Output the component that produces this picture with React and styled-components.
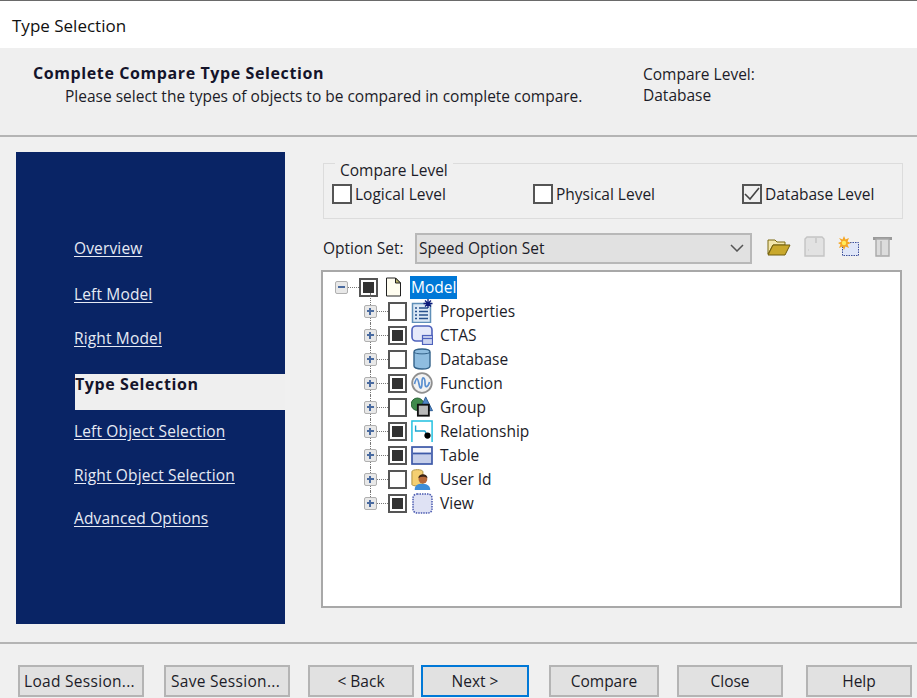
import React from 'react'
import styled, { createGlobalStyle } from 'styled-components'

const GlobalStyle = createGlobalStyle`
  html, body { margin: 0; padding: 0; background: #f0f0f0; }
  body { font-family: "Open Sans", "Noto Sans", "Liberation Sans", sans-serif; font-size: 15.5px; color: #1c1c28; }
  * { box-sizing: border-box; }
`

const Dialog = styled.div`
  width: 917px;
  height: 698px;
  overflow: hidden;
  display: flex;
  flex-direction: column;
  border-top: 1px solid #6a6a6a;
`
const TitleBar = styled.div`
  height: 47px;
  background: #fff;
  padding: 14px 0 0 12px;
  font-size: 17px;
  line-height: 22px;
  color: #111;
`
const Banner = styled.div`
  height: 89px;
  background: #efefef;
  border-bottom: 2px solid #b4b4b4;
  display: flex;
  padding-top: 14px;
`
const BannerText = styled.div`
  width: 643px;
  padding-left: 33px;
  line-height: 22px;
`
const BannerTitle = styled.div`
  font-weight: 700;
  font-size: 16px;
  letter-spacing: 0.6px;
  margin-bottom: 1px;
  color: #14142a;
`
const BannerSub = styled.div`
  padding-left: 32px;
`
const BannerLevel = styled.div`
  line-height: 21px;
  padding-top: 2px;
`
const Main = styled.div`
  height: 507px;
  display: flex;
  padding: 15px 0 0 16px;
  border-bottom: 2px solid #b4b4b4;
  background: #f0f0f0;
`
const Sidebar = styled.nav`
  width: 269px;
  height: 472px;
  flex: none;
  background: #092465;
  padding-top: 84px;
  display: flex;
  flex-direction: column;
`
const NavLink = styled.a`
  display: block;
  margin-top: ${p => p.$gap}px;
  padding-left: 58px;
  line-height: 24px;
  color: #e6eaf4;
  text-decoration: underline;
  text-underline-offset: 2px;
  font-size: 15.5px;
  letter-spacing: 0.15px;
`
const NavCurrent = styled.div`
  margin-top: ${p => p.$gap}px;
  margin-left: 59px;
  height: 36px;
  background: #efefef;
  font-weight: 700;
  font-size: 16px;
  letter-spacing: 0.6px;
  color: #14142a;
  line-height: 20px;
`
const Content = styled.div`
  flex: 1;
  padding: 11px 0 0 36px;
  display: flex;
  flex-direction: column;
`
const GroupBox = styled.div`
  margin-left: 2px;
  width: 580px;
  height: 56px;
  border: 1px solid #dcdcdc;
  padding: 19px 0 0 8px;
  display: flex;
  align-items: flex-start;
  position: relative;
`
const GroupLegend = styled.span`
  position: absolute;
  left: 11px;
  top: -1px;
  padding: 0 5px;
  line-height: 14px;
  background: #f0f0f0;
`
const CheckRow = styled.label`
  display: flex;
  align-items: center;
  width: ${p => p.$w}px;
  gap: 3px;
`
const CheckBox = styled.span`
  width: 20px;
  height: 20px;
  border: 2px solid #555;
  background: ${p => (p.$plain ? '#f0f0f0' : '#fff')};
  display: flex;
  align-items: center;
  justify-content: center;
  flex: none;
`
const OptionRow = styled.div`
  margin-top: 14px;
  height: 30px;
  display: flex;
  align-items: center;
`
const OptionLabel = styled.span`
  width: 94px;
  flex: none;
  padding-left: 2px;
`
const Select = styled.div`
  width: 337px;
  height: 31px;
  flex: none;
  background: #e1e1e1;
  border: 2px solid #b8b8b8;
  display: flex;
  align-items: center;
  justify-content: space-between;
  padding: 0 6px 0 2px;
`
const Tools = styled.div`
  margin: 0 0 3px 15px;
  display: flex;
  gap: 13px;
  align-items: center;
`
const TreeBox = styled.div`
  margin-top: 7px;
  width: 581px;
  height: 338px;
  background: #fff;
  border: 2px solid #a8a8a8;
  padding: 3px 0 0 12px;
`
const TreeRow = styled.div`
  height: 24px;
  display: flex;
  align-items: center;
  padding-left: ${p => (p.$child ? 29 : 0)}px;
  position: relative;
  &::before {
    content: ${p => (p.$child ? '""' : 'none')};
    position: absolute;
    left: 35px;
    top: ${p => (p.$first ? -6 : 0)}px;
    height: ${p => (p.$last ? 12 : p.$first ? 30 : 24)}px;
    border-left: 1px dotted #777;
  }
`
const Expander = styled.span`
  width: 13px;
  height: 13px;
  border: 1.5px solid #b0b0b0;
  border-radius: 2px;
  background: #e8e8e8;
  position: relative;
  flex: none;
  z-index: 1;
  &::before {
    content: "";
    position: absolute;
    left: 2px;
    right: 2px;
    top: 4px;
    height: 2px;
    background: #4a6ba0;
  }
  &::after {
    content: ${p => (p.$open ? 'none' : '""')};
    position: absolute;
    top: 2px;
    bottom: 2px;
    left: 4px;
    width: 2px;
    background: #4a6ba0;
  }
`
const Dots = styled.span`
  width: 11px;
  border-top: 1px dotted #777;
  flex: none;
`
const TreeCheck = styled.span`
  width: 19px;
  height: 19px;
  border: 2px solid #555;
  background: #fff;
  flex: none;
  display: flex;
  align-items: center;
  justify-content: center;
  &::after {
    content: ${p => (p.$on ? '""' : 'none')};
    width: 11px;
    height: 11px;
    background: #333;
  }
`
const IconSlot = styled.span`
  width: 22px;
  height: 24px;
  margin-left: 4px;
  flex: none;
  display: flex;
  align-items: center;
  justify-content: center;
`
const TreeLabel = styled.span`
  margin-left: 6px;
  padding: 0 1px;
  line-height: 23px;
  background: ${p => (p.$selected ? '#0078d7' : 'transparent')};
  color: ${p => (p.$selected ? '#fff' : '#1c1c28')};
`
const Footer = styled.div`
  flex: 1;
  display: flex;
  padding: 21px 0 0 18px;
`
const Button = styled.button`
  width: ${p => p.$w}px;
  height: 32px;
  margin-left: ${p => p.$gap || 0}px;
  background: #e1e1e1;
  border: 2px solid ${p => (p.$default ? '#0078d7' : '#b4b4b4')};
  font: inherit;
  letter-spacing: ${p => (p.$spaced ? '0.3px' : '0')};
  color: #1c1c28;
  padding: 0 ${p => (p.$spaced ? 3 : 0)}px 0 0;
  white-space: nowrap;
`

const PageIcon = () => (
  <svg width="17" height="20" viewBox="0 0 17 20"><path d="M1.500 1h9l5 5v13h-14z" fill="#fffdf0" stroke="#222" /><path d="M10.500 1v5h5z" fill="#b9b46a" stroke="#222" /></svg>
)
const PropertiesIcon = () => (
  <svg width="22" height="24" viewBox="0 0 22 24">
    <rect x="1.500" y="4.500" width="18" height="19" fill="#dbe8f5" stroke="#5f8fb8" strokeWidth="1.500" />
    <path d="M4 9h2M8 9h9M4 12.500h2M8 12.500h9M4 16h2M8 16h9M4 19.500h2M8 19.500h9" stroke="#27508c" strokeWidth="1.400" />
    <path d="M17 0v9M12.500 4.500h9M14 1.500l6 6M20 1.500l-6 6" stroke="#0c1a78" strokeWidth="1.300" />
  </svg>
)
const CtasIcon = () => (
  <svg width="22" height="20" viewBox="0 0 22 20">
    <rect x="1" y="1" width="20" height="15" rx="4" fill="#e6e9fa" stroke="#4f62bc" strokeWidth="1.600" />
    <rect x="11.500" y="10.500" width="10" height="9" fill="#cdd5f0" stroke="#4f62bc" strokeWidth="1.200" />
    <path d="M11.500 13.500h10" stroke="#4f62bc" strokeWidth="1.200" />
  </svg>
)
const DatabaseIcon = () => (
  <svg width="18" height="22" viewBox="0 0 18 22">
    <path d="M1 4c0-4 16-4 16 0v14c0 4-16 4-16 0z" fill="#8fbde0" stroke="#34638a" strokeWidth="1.400" />
    <path d="M1 4c0 2.500 16 2.500 16 0" fill="none" stroke="#34638a" />
  </svg>
)
const FunctionIcon = () => (
  <svg width="22" height="22" viewBox="0 0 22 22">
    <circle cx="11" cy="11" r="9.800" fill="#f2f2f2" stroke="#8f8f8f" strokeWidth="1.800" />
    <path d="M3.500 12c2-7 3-7 4.500 0s3 4 3-2 3-5 3 1 3 4 4.500-1" fill="none" stroke="#5a8fd0" strokeWidth="1.700" />
  </svg>
)
const GroupIcon = () => (
  <svg width="24" height="22" viewBox="0 0 24 22">
    <circle cx="7" cy="8" r="6.800" fill="#3f8a4c" stroke="#245c30" />
    <path d="M16 0l7.500 15H9z" fill="#4f86c6" stroke="#2c5a92" />
    <rect x="7.500" y="8.500" width="12" height="12" fill="#b9b9b9" stroke="#111" strokeWidth="2" />
  </svg>
)
const RelationshipIcon = () => (
  <svg width="24" height="24" viewBox="0 0 24 24">
    <path d="M1 24V1h22v23" fill="none" stroke="#1fc0e0" strokeWidth="1.600" />
    <path d="M5 6v6h10l3 5" fill="none" stroke="#1fa6d0" strokeWidth="1.500" />
    <circle cx="18" cy="17" r="3.400" fill="#000" />
  </svg>
)
const TableIcon = () => (
  <svg width="22" height="19" viewBox="0 0 22 19">
    <rect x="1" y="1" width="20" height="17" fill="#c6cfea" stroke="#3e5aa8" strokeWidth="1.700" />
    <rect x="2" y="2" width="18" height="4.500" fill="#f4f5fb" />
    <path d="M2 7.500h18" stroke="#3e5aa8" strokeWidth="1.700" />
  </svg>
)
const UserIcon = () => (
  <svg width="24" height="23" viewBox="0 0 24 23">
    <path d="M1 3c0-3 12-3 12 0v14c0 2-12 2-12 0z" fill="#f4cf72" stroke="#a98a34" />
    <path d="M4 23c0-6 4-7 8-7s9 1 9 7z" fill="#3f8ed8" />
    <circle cx="13" cy="11" r="4.800" fill="#b7693a" />
    <path d="M8 10c0-5.500 10-5.500 10 0-3-2-7-2-10 0z" fill="#3a2417" />
  </svg>
)
const ViewIcon = () => (
  <svg width="21" height="21" viewBox="0 0 21 21">
    <rect x="1" y="1" width="19" height="19" rx="4" fill="#dfe2f4" stroke="#4a5ab0" strokeWidth="1.500" strokeDasharray="1.500 1" />
  </svg>
)
const FolderIcon = () => (
  <svg width="24" height="20" viewBox="0 0 24 20">
    <path d="M1 17V3h7l2 2h8v3H6z" fill="#f3e6ac" stroke="#7c6a12" />
    <path d="M1 18l5-10h17l-5 10z" fill="#c9a82c" stroke="#6e5c0c" />
  </svg>
)
const SaveIcon = () => (
  <svg width="21" height="21" viewBox="0 0 21 21">
    <path d="M1 3l2-2h15l2 2v17H1z" fill="#e2e2e2" stroke="#c4c4c4" strokeWidth="1.400" />
    <path d="M12 2v5" stroke="#c4c4c4" strokeWidth="1.400" />
    <path d="M4 14h1" stroke="#c4c4c4" />
  </svg>
)
const NewIcon = () => (
  <svg width="22" height="21" viewBox="0 0 22 21">
    <rect x="4.500" y="6.500" width="16" height="13" fill="#dfe6f8" stroke="#3b4f9c" strokeDasharray="1.500 1" />
    <path d="M6 0l1.500 3.500L11 2 9.500 5.500 13 7l-3.500 1.500L11 12 7.500 10.500 6 14l-1.500-3.500L1 12l1.500-3.500L0 7l3.500-1.500L1 2l3.500 1.500z" fill="#f5a623" />
    <circle cx="6" cy="7" r="2.200" fill="#ffec5c" />
  </svg>
)
const TrashIcon = () => (
  <svg width="19" height="21" viewBox="0 0 19 21">
    <path d="M0 1h19v3H0z" fill="#9a9a9a" />
    <path d="M3 3h13v17H3z" fill="#dcdcdc" stroke="#a8a8a8" strokeWidth="1.400" />
    <path d="M8 5v14" stroke="#bcbcbc" strokeWidth="2" />
  </svg>
)
const Chevron = () => (
  <svg width="14" height="8" viewBox="0 0 14 8"><path d="M1 1l6 6 6-6" fill="none" stroke="#555" strokeWidth="1.500" /></svg>
)
const Tick = () => (
  <svg width="16" height="14" viewBox="0 0 16 14"><path d="M1 7l5 5L15 1" fill="none" stroke="#444" strokeWidth="1.600" /></svg>
)

const treeItems = [
  { label: 'Properties', on: false, Icon: PropertiesIcon },
  { label: 'CTAS', on: true, Icon: CtasIcon },
  { label: 'Database', on: false, Icon: DatabaseIcon },
  { label: 'Function', on: true, Icon: FunctionIcon },
  { label: 'Group', on: false, Icon: GroupIcon },
  { label: 'Relationship', on: true, Icon: RelationshipIcon },
  { label: 'Table', on: true, Icon: TableIcon },
  { label: 'User Id', on: false, Icon: UserIcon },
  { label: 'View', on: true, Icon: ViewIcon },
]

export default function App() {
  return (
    <>
      <GlobalStyle />
      <Dialog>
        <TitleBar>Type Selection</TitleBar>
        <Banner>
          <BannerText>
            <BannerTitle>Complete Compare Type Selection</BannerTitle>
            <BannerSub>Please select the types of objects to be compared in complete compare.</BannerSub>
          </BannerText>
          <BannerLevel>Compare Level:<br />Database</BannerLevel>
        </Banner>
        <Main>
          <Sidebar>
            <NavLink $gap={0}>Overview</NavLink>
            <NavLink $gap={22}>Left Model</NavLink>
            <NavLink $gap={20}>Right Model</NavLink>
            <NavCurrent $gap={24}>Type Selection</NavCurrent>
            <NavLink $gap={9}>Left Object Selection</NavLink>
            <NavLink $gap={20}>Right Object Selection</NavLink>
            <NavLink $gap={19}>Advanced Options</NavLink>
          </Sidebar>
          <Content>
            <GroupBox>
              <GroupLegend>Compare Level</GroupLegend>
              <CheckRow $w={201}><CheckBox />Logical Level</CheckRow>
              <CheckRow $w={209}><CheckBox />Physical Level</CheckRow>
              <CheckRow $w={150}><CheckBox $plain><Tick /></CheckBox>Database Level</CheckRow>
            </GroupBox>
            <OptionRow>
              <OptionLabel>Option Set:</OptionLabel>
              <Select>Speed Option Set<Chevron /></Select>
              <Tools>
                <FolderIcon />
                <SaveIcon />
                <NewIcon />
                <TrashIcon />
              </Tools>
            </OptionRow>
            <TreeBox>
              <TreeRow>
                <Expander $open />
                <Dots />
                <TreeCheck $on />
                <IconSlot><PageIcon /></IconSlot>
                <TreeLabel $selected>Model</TreeLabel>
              </TreeRow>
              {treeItems.map(({ label, on, Icon }, i) => (
                <TreeRow key={label} $child $first={i === 0} $last={i === treeItems.length - 1}>
                  <Expander />
                  <Dots />
                  <TreeCheck $on={on} />
                  <IconSlot><Icon /></IconSlot>
                  <TreeLabel>{label}</TreeLabel>
                </TreeRow>
              ))}
            </TreeBox>
          </Content>
        </Main>
        <Footer>
          <Button $w={126} $spaced>Load Session...</Button>
          <Button $w={126} $gap={20} $spaced>Save Session...</Button>
          <Button $w={106} $gap={18}>&lt; Back</Button>
          <Button $w={108} $gap={7} $default>Next &gt;</Button>
          <Button $w={110} $gap={20}>Compare</Button>
          <Button $w={106} $gap={18}>Close</Button>
          <Button $w={106} $gap={23}>Help</Button>
        </Footer>
      </Dialog>
    </>
  )
}
